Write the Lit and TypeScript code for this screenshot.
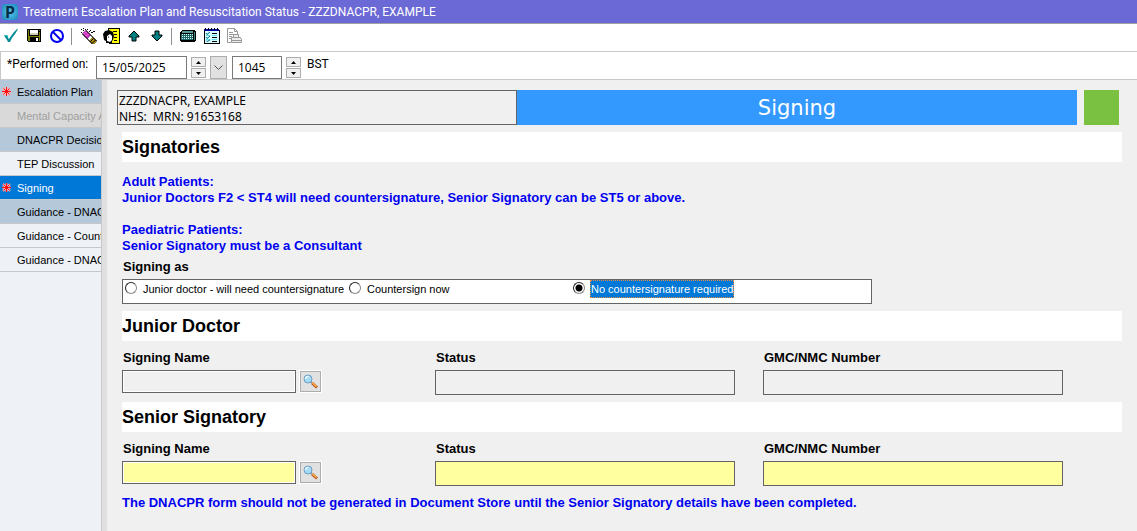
import { LitElement, html, svg, css, nothing } from "lit";
import { customElement, property, state } from "lit/decorators.js";
import { classMap } from "lit/directives/class-map.js";

const icons: Record<string, unknown> = {
  sign: svg`<path d="M1 7h3l1 1v2l1 1 2-3 3-4 3-3h1l-3 5-3 4-2 4H5L4 12 2 9z" fill="#008b94"/><path d="M1 7.500h3l1 2" stroke="#36c5cf" fill="none"/>`,
  save: svg`<g shape-rendering="crispEdges"><path d="M1 1h14v13H2l-1-1z" fill="#000"/><path d="M2 2h1v11H2zM13 4h1v9h-1zM3 8h10v1H3zM13 2h1v1h-1z" fill="#808000"/><path d="M4 2h8v5H4z" fill="#fff"/><path d="M4 5h8v2H4z" fill="#d4d0b8"/><path d="M3 9h1v4H3z" fill="#808000"/><path d="M10 10h2v3h-2z" fill="#fff"/></g>`,
  cancel: svg`<circle cx="8" cy="8" r="6" fill="none" stroke="#0000f0" stroke-width="2"/><path d="M4 4l8 8" stroke="#0000f0" stroke-width="2"/>`,
  clear: svg`<g shape-rendering="crispEdges"><path d="M1 1h1v1H1zM3 0h1v1H3zM5 1h1v1H5zM1 4h1v1H1zM7 1h1v1H7zM9 3h1v1H9zM11 4h2v1h-2zM13 3h2v1h-2zM3 2h1v1H3zM10 2h1v1h-1z" fill="#000"/></g><path d="M4 4l11 11" stroke="#000" stroke-width="6"/><path d="M4 4l5 5" stroke="#d020c0" stroke-width="4"/><path d="M5 3.500l4 4M3.500 5l4 4" stroke="#ffc0f0" stroke-width="1" stroke-dasharray="2 1"/><path d="M9 9l2 2" stroke="#fff" stroke-width="4"/><path d="M11 11l4 4" stroke="#b09000" stroke-width="4"/><path d="M10.500 13.500l3-3M12.500 15l3-3" stroke="#000"/>`,
  chart: svg`<g shape-rendering="crispEdges"><path d="M5 0h11v15H6V5z" fill="#ffff00" stroke="#000"/><path d="M10 3h4v1h-4zM11 6h3v1h-3zM11 9h3v1h-3zM11 12h3v1h-3z" fill="#000"/></g><path d="M0 6l2-3 4-1 4 2 1 4-1 4-1 1v2H3v-2L1 12z" fill="#000"/><path d="M4 8l3-2 2 2v4l-2 2-3-1z" fill="#fff"/><path d="M5 9h1" stroke="#000"/>`,
  up: svg`<path d="M8 3l5 5v1h-3v4H6V9H3V8z" fill="#008080" stroke="#000"/>`,
  down: svg`<path d="M8 13l5-5V7h-3V3H6v4H3v1z" fill="#008080" stroke="#000"/>`,
  calc: svg`<g shape-rendering="crispEdges"><path d="M2 2h13v1h1v10h-1v1H1v-1H0V4h1V3h1z" fill="#000"/><path d="M2 3h11v2H2z" fill="#5a9a9a"/><path d="M1 6h12v6H1z" fill="#206868"/><g fill="#d8ffff">${[6, 8, 10].map((y) =>
    [2, 4, 6, 8, 10, 12].map((x) => svg`<rect x=${x} y=${y} width="1" height="1"/>`))}</g><path d="M14 4h1v8h-1z" fill="#408080"/></g>`,
  list: svg`<g shape-rendering="crispEdges"><path d="M1 2h15v13H1z" fill="#d8ffff" stroke="#000"/><path d="M1 1h15v2H1z" fill="#0000a0"/><path d="M2 0h1v2H2zM5 0h1v2H5zM8 0h1v2H8zM11 0h1v2h-1zM14 0h1v2h-1z" fill="#000"/><path d="M9 5h5v1H9zM9 9h5v1H9zM9 13h5v1H9z" fill="#000"/><path d="M9 7h5v1H9zM9 11h5v1H9zM3 7h4v1H3zM3 11h4v1H3z" fill="#60e0f0"/></g><path d="M3 5l1 1.500L7 4M3 9l1 1.500L7 8M3 12.500l1 1L7 12" stroke="#007080" fill="none"/>`,
  print: svg`<g fill="none" stroke="#989898"><path d="M1.500 14.500V.5h7l3 3v3M8.500.5v3h3M3 4.500h4M3 6.500h4M3 8.500h3M3 10.500h2M1.500 14.500H5"/><path d="M7.500 9.500v-3h5v3M5.500 9.500h9l1 2v3h-10zM6 12.500h9" fill="#ececec"/></g>`,
};

@customElement("tool-button")
class ToolButton extends LitElement {
  @property() icon = "";
  @property() label = "";
  static styles = css`
    :host { display: block; }
    .btn { display: block; width: 23px; height: 24px; padding: 4px 3px; border: 0; background: none; }
    .glyph { display: block; width: 17px; height: 16px; }
  `;
  render() {
    return html`<button class="btn" type="button" aria-label=${this.label} title=${this.label}>
      <svg class="glyph" viewBox="0 0 17 16" aria-hidden="true">${icons[this.icon]}</svg>
    </button>`;
  }
}

@customElement("spin-buttons")
class SpinButtons extends LitElement {
  @property() label = "";
  static styles = css`
    :host { display: grid; gap: 1px; width: 15px; align-content: center; }
    .step { display: grid; place-items: center; height: 10px; padding: 0; border: 1px solid #adadad; background: #f0f0f0; }
    .arrow { display: block; width: 5px; height: 3px; }
  `;
  render() {
    return html`
      <button class="step" type="button" aria-label="Increase ${this.label}"><svg class="arrow" viewBox="0 0 5 3"><path d="M0 3L2.500 0 5 3z" /></svg></button>
      <button class="step" type="button" aria-label="Decrease ${this.label}"><svg class="arrow" viewBox="0 0 5 3"><path d="M0 0L2.500 3 5 0z" /></svg></button>`;
  }
}

@customElement("signatory-fields")
class SignatoryFields extends LitElement {
  @property({ type: Boolean }) required = false;
  static styles = css`
    :host { display: block; padding: 9px 0 7px; }
    .grid { display: grid; grid-template-columns: 313fr 328fr 359fr; }
    .label { display: block; padding: 0 1px; margin-bottom: 4px; font-size: 13px; line-height: 16px; font-weight: bold; }
    .box { box-sizing: border-box; display: block; width: 300px; max-width: 100%; height: 25px; border: 1px solid #646464; border-radius: 0; background: #f0f0f0; padding: 0 4px; font: inherit; outline: 0; }
    .lookup { display: flex; gap: 4px; }
    .name { width: 174px; height: 23px; box-shadow: inset 0 0 0 1px #fff; }
    .required { background: #ffffa0; }
    .find { width: 21px; height: 21px; margin-top: 1px; padding: 2px; border: 1px solid #adadad; background: #e1e1e1; outline: 1px solid #fff; }
    .lens { display: block; width: 15px; height: 15px; }
  `;
  render() {
    const cls = classMap({ box: true, required: this.required });
    return html`<div class="grid">
      <div>
        <label class="label" for="name">Signing Name</label>
        <div class="lookup">
          <input id="name" class="name ${cls}" ?required=${this.required} />
          <button class="find" type="button" aria-label="Find signatory">
            <svg class="lens" viewBox="0 0 15 15" aria-hidden="true">
              <path d="M9 9l5 4.500" stroke="#b85a28" stroke-width="3" />
              <path d="M9 8.500l4.500 4" stroke="#ffb347" stroke-width="1.500" />
              <path d="M7.500 7.500l1.500 1.500" stroke="#8898a8" stroke-width="2" />
              <circle cx="5" cy="5" r="4" fill="#a4dcf8" stroke="#6d9cc0" />
              <path d="M2.500 5a2.500 2.500 0 0 1 3-2.500" fill="none" stroke="#f0fbff" stroke-width="1.500" />
            </svg>
          </button>
        </div>
      </div>
      <div>
        <label class="label" for="status">Status</label>
        <input id="status" class=${cls} ?required=${this.required} />
      </div>
      <div>
        <label class="label" for="number">GMC/NMC Number</label>
        <input id="number" class=${cls} ?required=${this.required} />
      </div>
    </div>`;
  }
}

interface Section { name: string; tone?: "done" | "off" | "current"; flagged?: boolean; }

const sections: Section[] = [
  { name: "Escalation Plan", tone: "done", flagged: true },
  { name: "Mental Capacity A", tone: "off" },
  { name: "DNACPR Decisio", tone: "done" },
  { name: "TEP Discussion" },
  { name: "Signing", tone: "current", flagged: true },
  { name: "Guidance - DNAC", tone: "done" },
  { name: "Guidance - Count" },
  { name: "Guidance - DNAC" },
];

const choices = ["Junior doctor - will need countersignature", "Countersign now", "No countersignature required"];

@customElement("app-root")
class AppRoot extends LitElement {
  @state() private choice = 2;

  static styles = css`
    :host { display: flex; flex-direction: column; min-height: 100vh; background: #f0f0f0; color: #000; font-family: "Liberation Sans", Arial, sans-serif; font-size: 13px; line-height: 16px; }
    .title { display: flex; align-items: center; gap: 5px; height: 23px; padding-left: 2px; background: #6b69d6; border-bottom: 1px solid #a0a0a0; color: #fff; font: 12px/16px Roboto, "Segoe UI", sans-serif; }
    .title-text { margin: 0; font: inherit; white-space: nowrap; }
    .logo { display: grid; place-items: center; width: 16px; height: 16px; border-radius: 3px; background: radial-gradient(#5cc8ea, #1a86bc); color: #062c48; font: bold 16px/16px "Noto Sans", sans-serif; }
    .tools { display: flex; height: 24px; padding-bottom: 3px; background: #fff; }
    .split { width: 1px; margin: 4px 5px 3px 2px; background: #909090; }
    .performed { display: flex; gap: 4px; height: 23px; padding: 4px 0 0 6px; border: 1px solid #c8c8c8; border-right: 0; background: #fff; font: 12px/16px Roboto, "Segoe UI", sans-serif; }
    .caption { width: 85px; white-space: nowrap; }
    .entry { box-sizing: border-box; height: 23px; border: 1px solid #7a7a7a; border-radius: 0; background: #fff; padding: 0 5px; font: 12px "Open Sans", "Segoe UI", sans-serif; outline: 0; }
    .date { width: 91px; }
    .time { width: 50px; margin-left: 1px; }
    .drop { box-sizing: border-box; display: grid; place-items: center; width: 17px; padding: 0; border: 1px solid #adadad; background: #e1e1e1; }
    .chevron { width: 9px; height: 6px; }
    .zone { margin-left: 2px; }
    .body { display: flex; flex: 1; }
    .nav { width: 101px; overflow: hidden; border-right: 1px solid #c8c8c8; background: #eef2f7; }
    .item { display: flex; align-items: center; gap: 6px; height: 23px; padding-left: 2px; border-bottom: 1px solid #c8c8c8; color: #000; font-size: 11px; text-decoration: none; white-space: nowrap; }
    .done { background: #b4c8da; }
    .off { background: #d9d9d9; color: #a0a0a0; }
    .current { background: #0078d7; color: #fff; }
    .flag { flex: none; width: 9px; height: 9px; }
    .main { flex: 1; min-width: 0; padding: 10px 15px 10px 10px; border-left: 5px solid #e0e0e0; }
    .banner { display: flex; height: 35px; margin-right: 3px; }
    .patient { box-sizing: border-box; width: 400px; padding: 2px 1px 0; border: 1px solid #646464; font: 12px/16px "Noto Sans", Tahoma, sans-serif; }
    .line { margin: 0; white-space: pre; }
    .heading { flex: 1; margin: 0; background: #3399ff; color: #fff; text-align: center; font: 21px/36px "DejaVu Sans", Verdana, sans-serif; }
    .status { width: 35px; margin-left: 7px; background: #7ac142; }
    .form { padding: 7px 0 0 5px; }
    .band { margin: 0; background: #fff; font-size: 18px; line-height: 30px; }
    .notes { padding: 12px 0 5px; }
    .note { margin: 0; color: #0000f0; font-weight: bold; }
    .gap { margin-top: 16px; }
    .footer { margin-top: 2px; }
    .signing { margin: 0 0 7px; padding: 0; border: 0; }
    .legend { padding: 0 1px; margin-bottom: 4px; font-weight: bold; }
    .choices { box-sizing: border-box; display: grid; grid-template-columns: repeat(3, 224px); width: 75%; height: 25px; padding-left: 2px; border: 1px solid #646464; background: #fff; font-size: 11px; line-height: 16px; }
    .choice { display: flex; align-items: flex-start; gap: 5px; white-space: nowrap; }
    .dot { appearance: none; box-sizing: border-box; flex: none; width: 12px; height: 12px; margin: 2px 0 0; border: 1px solid; border-color: #222 #888 #888 #222; border-radius: 50%; background: #fff; }
    .dot:checked { background: radial-gradient(#000 0 3px, #fff 4px); }
    .choice-text { border: 1px dotted transparent; }
    .dot:checked + .choice-text { border-color: #f08a3c; background: #0078d7; color: #fff; }
  `;

  private flag() {
    return html`<svg class="flag" viewBox="0 0 9 9" aria-label="Required"><path d="M4.500 0v9M0 4.500h9M1 1l7 7M8 1l-7 7" stroke="#ffb0b0" stroke-width="2" /><path d="M4.500 0v9M0 4.500h9M1.500 1.500l6 6M7.500 1.500l-6 6" stroke="#ff1010" stroke-width="1" /></svg>`;
  }

  render() {
    const tool = (icon: string, label: string) => html`<tool-button icon=${icon} label=${label}></tool-button>`;
    return html`
      <header class="title">
        <span class="logo">P</span>
        <h1 class="title-text">Treatment Escalation Plan and Resuscitation Status - ZZZDNACPR, EXAMPLE</h1>
      </header>
      <div class="tools" role="toolbar" aria-label="Form">
        ${tool("sign", "Sign")}${tool("save", "Save")}${tool("cancel", "Cancel")}
        <span class="split"></span>
        ${tool("clear", "Clear")}${tool("chart", "Chart")}${tool("up", "Previous")}${tool("down", "Next")}
        <span class="split"></span>
        ${tool("calc", "Calculator")}${tool("list", "Flowsheet")}${tool("print", "Print")}
      </div>
      <div class="performed">
        <label class="caption" for="date">*Performed on:</label>
        <input id="date" class="entry date" .value=${"15/05/2025"} />
        <spin-buttons label="date"></spin-buttons>
        <button class="drop" type="button" aria-label="Open calendar">
          <svg class="chevron" viewBox="0 0 9 6"><path d="M.5.5l4 4 4-4" fill="none" stroke="#505050" /></svg>
        </button>
        <input class="entry time" aria-label="Time" .value=${"1045"} />
        <spin-buttons label="time"></spin-buttons>
        <span class="zone">BST</span>
      </div>
      <div class="body">
        <nav class="nav">
          ${sections.map((s) => html`<a href="#" class="item ${s.tone ?? ""}" aria-current=${s.tone === "current" ? "page" : nothing}>
            ${s.flagged ? this.flag() : html`<span class="flag"></span>`}<span>${s.name}</span></a>`)}
        </nav>
        <main class="main">
          <div class="banner">
            <div class="patient">
              <p class="line">ZZZDNACPR, EXAMPLE</p>
              <p class="line">NHS:  MRN: 91653168</p>
            </div>
            <h2 class="heading">Signing</h2>
            <span class="status"></span>
          </div>
          <form class="form">
            <h3 class="band">Signatories</h3>
            <div class="notes">
              <p class="note">Adult Patients:<br />Junior Doctors F2 &lt; ST4 will need countersignature, Senior Signatory can be ST5 or above.</p>
              <p class="note gap">Paediatric Patients:<br />Senior Signatory must be a Consultant</p>
            </div>
            <fieldset class="signing">
              <legend class="legend">Signing as</legend>
              <div class="choices">
                ${choices.map((text, i) => html`<label class="choice">
                  <input class="dot" type="radio" name="signing" .checked=${i === this.choice} @change=${() => (this.choice = i)} />
                  <span class="choice-text">${text}</span>
                </label>`)}
              </div>
            </fieldset>
            <h3 class="band">Junior Doctor</h3>
            <signatory-fields></signatory-fields>
            <h3 class="band">Senior Signatory</h3>
            <signatory-fields required></signatory-fields>
            <p class="note footer">The DNACPR form should not be generated in Document Store until the Senior Signatory details have been completed.</p>
          </form>
        </main>
      </div>
    `;
  }
}
